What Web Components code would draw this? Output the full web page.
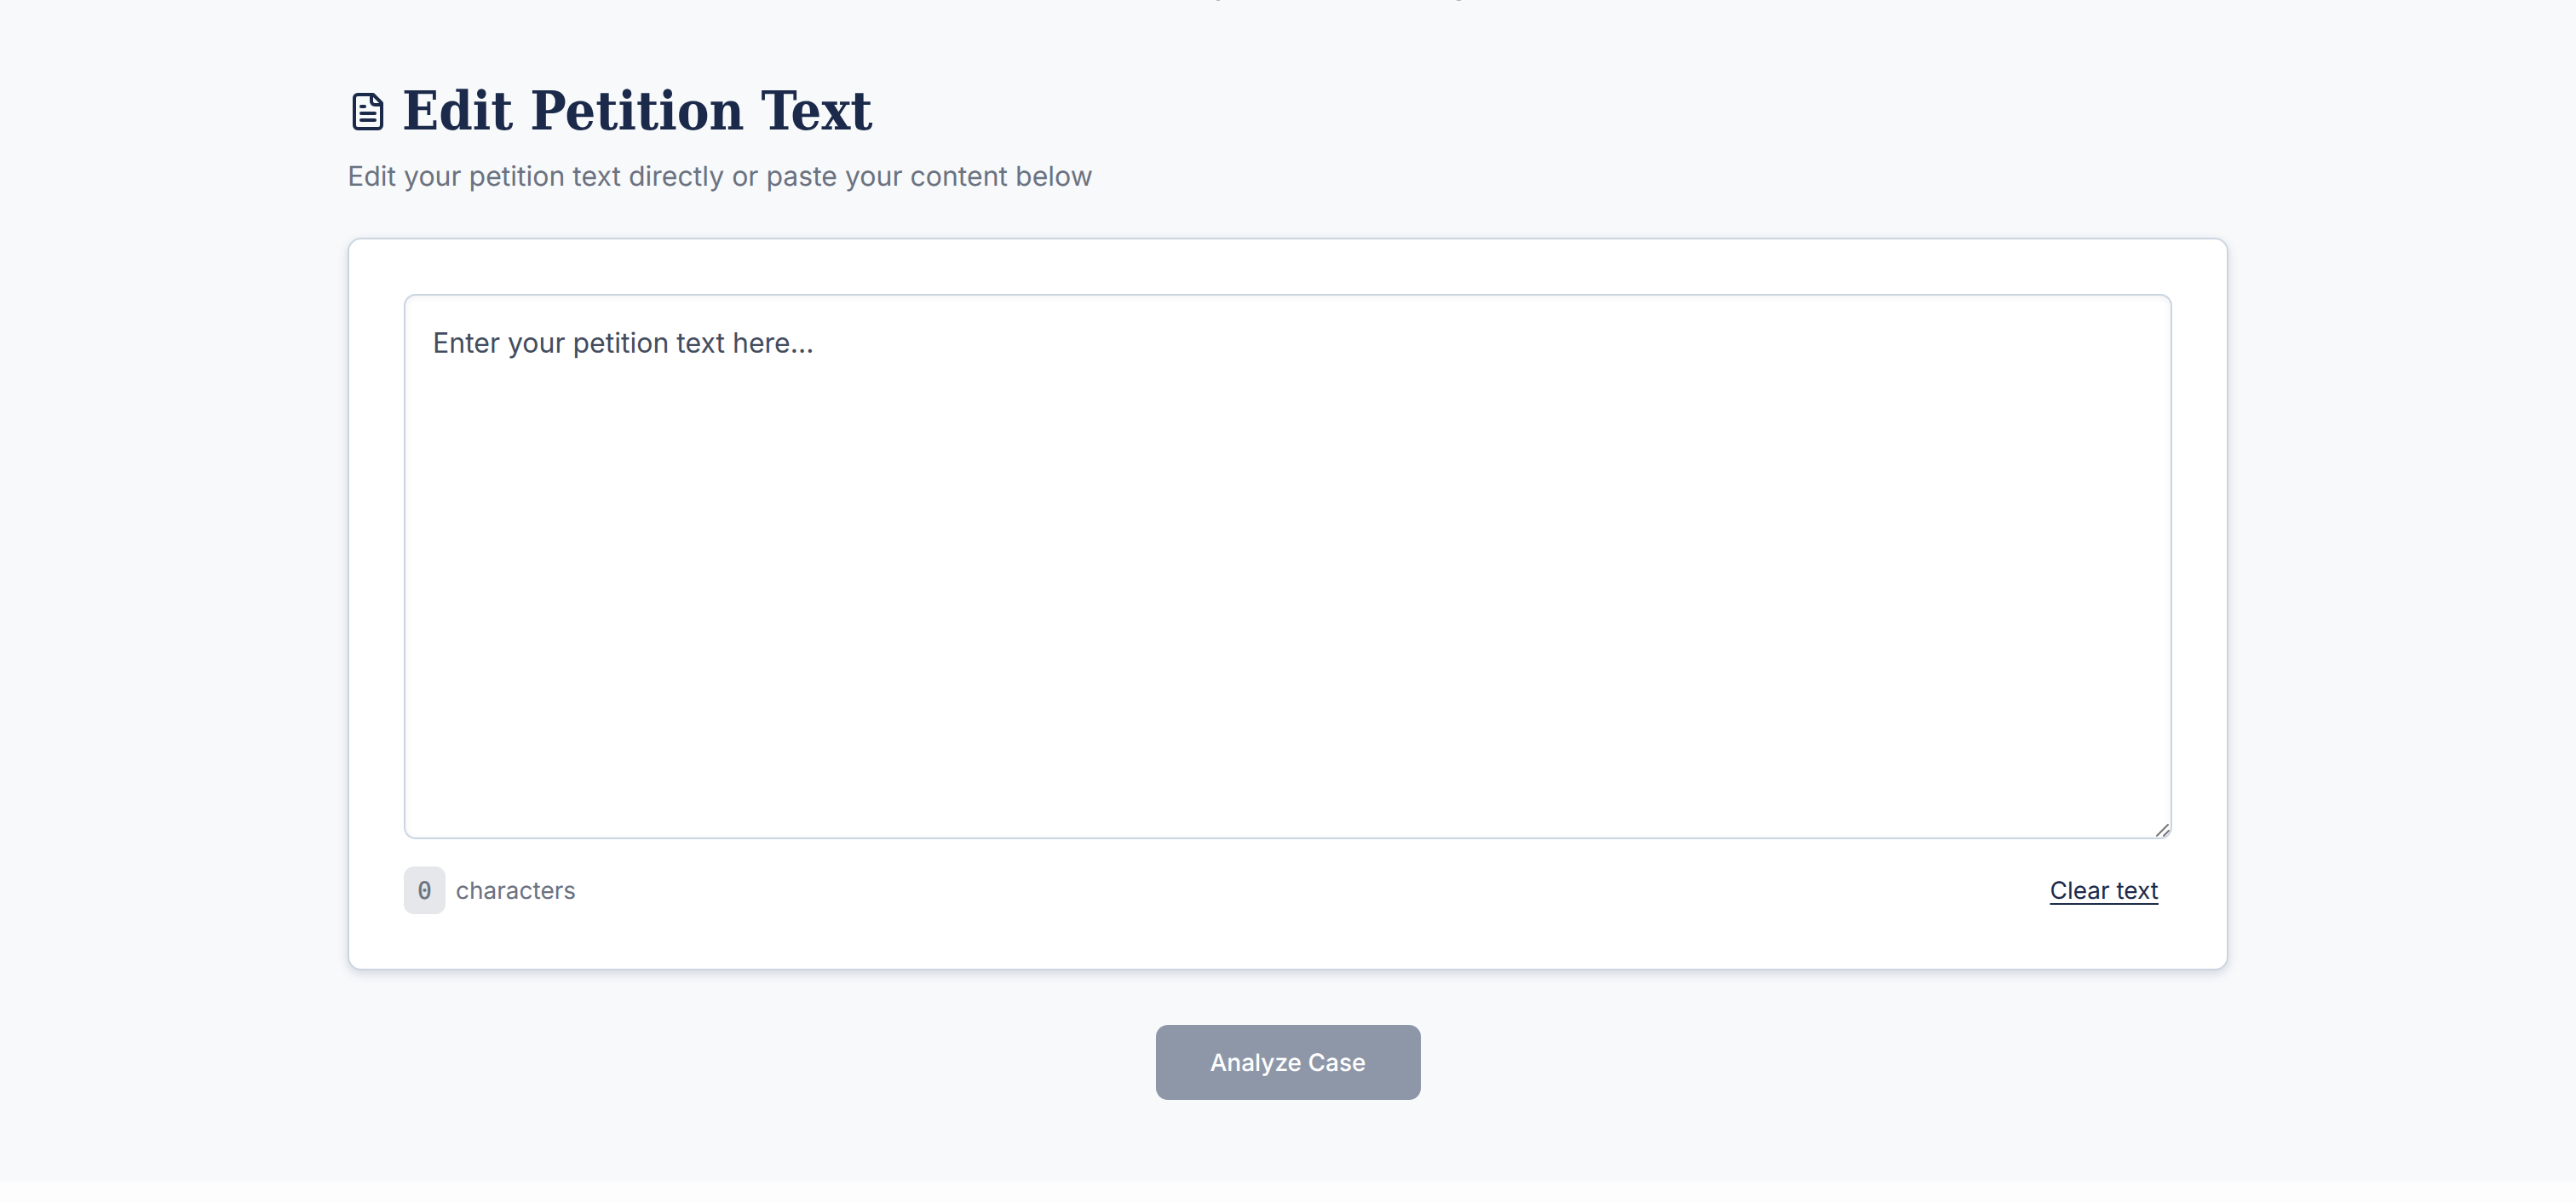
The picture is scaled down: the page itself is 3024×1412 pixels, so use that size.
<!DOCTYPE html>
<html lang="en">
<head>
<meta charset="utf-8">
<title>Edit Petition Text</title>
<style>
  html, body { margin: 0; background: #fdfdfd; }
  body { font-family: Inter, "Liberation Sans", sans-serif; text-rendering: geometricPrecision; }
</style>
</head>
<body>
<template id="petition-page">
  <style>
    :host { display: block; position: relative; background: #f8f9fb; height: 1387px; box-sizing: border-box; padding: 90px 408px 0; }
    /* descenders of the section scrolled out above */
    i { position: absolute; top: 0; height: 1px; background: #b4b7bc; }
    .a { left: 1428px; width: 4px; }
    .b { left: 1710px; width: 5px; }
  </style>
  <i class="a"></i><i class="b"></i>
  <slot></slot>
</template>

<template id="page-heading">
  <style>
    :host { display: block; margin-bottom: 48px; }
    .title { display: flex; align-items: center; gap: 16px; height: 80px; }
    h1 { margin: 0; font: 700 condensed 63px/80px "DejaVu Serif", "Liberation Serif", serif; color: #1b2a4a; }
    svg { width: 48px; height: 48px; flex: none; margin-top: 2px; }
    p { margin: 13px 0 0; font-size: 32px; line-height: 48px; color: #6b7280; }
  </style>
  <div class="title">
    <svg viewBox="0 0 24 24" fill="none" stroke="#1b2a4a" stroke-width="2" stroke-linecap="round" stroke-linejoin="round">
      <path d="M15 2H6a2 2 0 0 0-2 2v16a2 2 0 0 0 2 2h12a2 2 0 0 0 2-2V7Z"/>
      <path d="M14 2v4a2 2 0 0 0 2 2h4"/>
      <path d="M10 9H8"/><path d="M16 13H8"/><path d="M16 17H8"/>
    </svg>
    <h1><slot name="title"></slot></h1>
  </div>
  <p><slot name="sub"></slot></p>
</template>

<template id="petition-editor">
  <style>
    :host { display: block; box-sizing: border-box; background: #fff; border: 2px solid #cbd5e1; border-radius: 16px; padding: 64px; box-shadow: 0 4px 12px rgba(100,116,139,.25); }
    .box { position: relative; }
    textarea { display: block; box-sizing: border-box; width: 100%; height: 640px; margin: 0; padding: 32px; background: #fff; border: 2px solid #cbd5e1; border-radius: 14px; outline: none; font: 32px/48px Inter, sans-serif; color: #434c5e; box-shadow: inset 0 2px 8px rgba(0,0,0,.06); resize: none; }
    textarea::placeholder { color: #434c5e; opacity: 1; }
    /* resize grip, drawn at the size of the reference */
    .grip { position: absolute; right: 0; bottom: 0; width: 20px; height: 20px; pointer-events: none; }
    .foot { display: flex; align-items: center; justify-content: space-between; margin-top: 32px; }
    .count { display: flex; align-items: center; gap: 12px; font-size: 28px; color: #6b7280; }
    .num { display: flex; align-items: center; justify-content: center; box-sizing: border-box; width: 49px; height: 56px; background: #e5e7eb; border-radius: 12px; font: 28px "DejaVu Sans Mono", monospace; -webkit-text-stroke: .4px #6b7280; }
    a { margin-right: 16px; font-size: 28px; color: #1b2a4a; text-decoration: underline; text-decoration-thickness: 2px; text-underline-offset: 5px; }
  </style>
  <div class="box">
    <textarea placeholder="Enter your petition text here..."></textarea>
    <svg class="grip" viewBox="0 0 20 20" stroke="#777" stroke-width="2" stroke-linecap="round">
      <path d="M2 16 15 3"/><path d="M10 16 16 10"/>
    </svg>
  </div>
  <div class="foot">
    <div class="count"><span class="num">0</span><span>characters</span></div>
    <a>Clear text</a>
  </div>
</template>

<template id="analyze-button">
  <style>
    :host { display: block; width: 311px; margin: 64px auto 0; }
    button { display: block; width: 100%; height: 88px; border: 0; padding: 0; background: #8e97a8; border-radius: 14px; font: 500 28px Inter, sans-serif; text-rendering: geometricPrecision; color: #fff; }
  </style>
  <button><slot></slot></button>
</template>

<petition-page>
  <page-heading>
    <span slot="title">Edit Petition Text</span>
    <span slot="sub">Edit your petition text directly or paste your content below</span>
  </page-heading>
  <petition-editor></petition-editor>
  <analyze-button>Analyze Case</analyze-button>
</petition-page>

<script>
function register(name) {
  customElements.define(name, class extends HTMLElement {
    constructor() {
      super();
      var shadow = this.attachShadow({mode: 'open'});
      shadow.appendChild(document.getElementById(name).content.cloneNode(true));
    }
  });
}
['petition-page', 'page-heading', 'petition-editor', 'analyze-button'].forEach(register);
</script>
</body>
</html>
